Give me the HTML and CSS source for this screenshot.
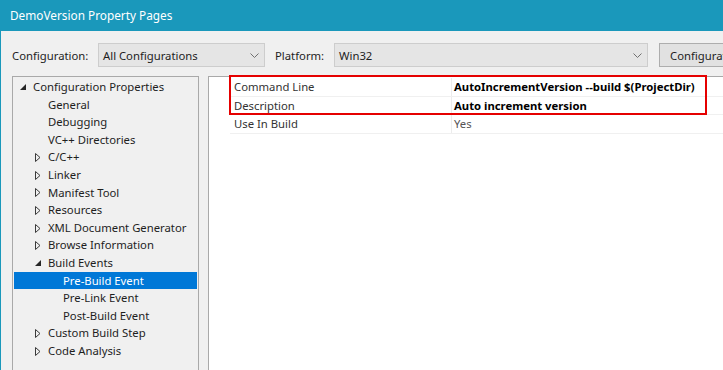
FILE: index.html
```html
<!DOCTYPE html>
<html>
<head>
<meta charset="utf-8">
<title>DemoVersion Property Pages</title>
<link rel="stylesheet" href="styles.css">
</head>
<body>
<div class="window">
  <div class="titlebar">DemoVersion Property Pages</div>
  <div class="toolbar">
    <span class="label">Configuration:</span>
    <div class="combo combo-config">
      <span>All Configurations</span>
      <svg class="chev" width="9" height="5" viewBox="0 0 9 5"><path d="M0.5 0.5 L4.5 4.5 L8.5 0.5" fill="none" stroke="#707070" stroke-width="1"/></svg>
    </div>
    <span class="label label-platform">Platform:</span>
    <div class="combo combo-platform">
      <span>Win32</span>
      <svg class="chev" width="9" height="5" viewBox="0 0 9 5"><path d="M0.5 0.5 L4.5 4.5 L8.5 0.5" fill="none" stroke="#707070" stroke-width="1"/></svg>
    </div>
    <button class="btn">Configuration Manager...</button>
  </div>
  <div class="main">
    <div class="tree">
      <div class="node l0"><span class="twisty"><svg width="6" height="6" viewBox="0 0 6 6"><polygon points="6,0 6,6 0,6" fill="#262626"/></svg></span>Configuration Properties</div>
      <div class="node l1"><span class="twisty"></span>General</div>
      <div class="node l1"><span class="twisty"></span>Debugging</div>
      <div class="node l1"><span class="twisty"></span>VC++ Directories</div>
      <div class="node l1"><span class="twisty"><svg width="6" height="9" viewBox="0 0 6 9"><polygon points="0.5,0.5 5,4.5 0.5,8.5" fill="none" stroke="#3a3a3a" stroke-width="1"/></svg></span>C/C++</div>
      <div class="node l1"><span class="twisty"><svg width="6" height="9" viewBox="0 0 6 9"><polygon points="0.5,0.5 5,4.5 0.5,8.5" fill="none" stroke="#3a3a3a" stroke-width="1"/></svg></span>Linker</div>
      <div class="node l1"><span class="twisty"><svg width="6" height="9" viewBox="0 0 6 9"><polygon points="0.5,0.5 5,4.5 0.5,8.5" fill="none" stroke="#3a3a3a" stroke-width="1"/></svg></span>Manifest Tool</div>
      <div class="node l1"><span class="twisty"><svg width="6" height="9" viewBox="0 0 6 9"><polygon points="0.5,0.5 5,4.5 0.5,8.5" fill="none" stroke="#3a3a3a" stroke-width="1"/></svg></span>Resources</div>
      <div class="node l1"><span class="twisty"><svg width="6" height="9" viewBox="0 0 6 9"><polygon points="0.5,0.5 5,4.5 0.5,8.5" fill="none" stroke="#3a3a3a" stroke-width="1"/></svg></span>XML Document Generator</div>
      <div class="node l1"><span class="twisty"><svg width="6" height="9" viewBox="0 0 6 9"><polygon points="0.5,0.5 5,4.5 0.5,8.5" fill="none" stroke="#3a3a3a" stroke-width="1"/></svg></span>Browse Information</div>
      <div class="node l1"><span class="twisty"><svg width="6" height="6" viewBox="0 0 6 6"><polygon points="6,0 6,6 0,6" fill="#262626"/></svg></span>Build Events</div>
      <div class="node l2 selected"><span class="twisty"></span>Pre-Build Event</div>
      <div class="node l2"><span class="twisty"></span>Pre-Link Event</div>
      <div class="node l2"><span class="twisty"></span>Post-Build Event</div>
      <div class="node l1"><span class="twisty"><svg width="6" height="9" viewBox="0 0 6 9"><polygon points="0.5,0.5 5,4.5 0.5,8.5" fill="none" stroke="#3a3a3a" stroke-width="1"/></svg></span>Custom Build Step</div>
      <div class="node l1"><span class="twisty"><svg width="6" height="9" viewBox="0 0 6 9"><polygon points="0.5,0.5 5,4.5 0.5,8.5" fill="none" stroke="#3a3a3a" stroke-width="1"/></svg></span>Code Analysis</div>
    </div>
    <div class="grid">
      <div class="prop"><span class="name">Command Line</span><span class="value strong">AutoIncrementVersion --build $(ProjectDir)</span></div>
      <div class="prop"><span class="name">Description</span><span class="value strong">Auto increment version</span></div>
      <div class="prop"><span class="name">Use In Build</span><span class="value">Yes</span></div>
      <div class="highlight"></div>
    </div>
  </div>
</div>
</body>
</html>
```
FILE: styles.css
```css
html, body {
  margin: 0;
  padding: 0;
}
body {
  width: 723px;
  height: 370px;
  overflow: hidden;
  background: #f0f0f0;
  font-family: "Noto Sans", "Open Sans", sans-serif;
  font-size: 11.3px;
  color: #1e1e1e;
}
.window {
  height: 370px;
  box-sizing: border-box;
  border-left: 1px solid #1a98bb;
}
.titlebar {
  height: 31px;
  line-height: 31px;
  background: #1a98bb;
  color: #ffffff;
  font-size: 11.8px;
  padding-left: 9px;
  white-space: nowrap;
}
.toolbar {
  display: flex;
  align-items: center;
  height: 24px;
  padding: 12px 0 0 11px;
  white-space: nowrap;
}
.label {
  flex: none;
  width: 86px;
  color: #1e1e1e;
}
.label-platform {
  width: 59px;
  margin-left: 10px;
}
.combo {
  flex: none;
  box-sizing: border-box;
  height: 24px;
  display: flex;
  align-items: center;
  justify-content: space-between;
  padding: 0 5px 0 4px;
  background: #e5e5e5;
  border: 1px solid #cdcdcd;
}
.combo-config {
  width: 167px;
}
.combo-platform {
  width: 314px;
}
.chev {
  display: block;
  flex: none;
}
.btn {
  flex: none;
  box-sizing: border-box;
  height: 24px;
  margin-left: 11px;
  padding: 0 10px;
  background: #e1e1e1;
  border: 1px solid #adadad;
  font: inherit;
  color: #1e1e1e;
  white-space: nowrap;
}
.main {
  display: flex;
  gap: 9px;
  margin-top: 9px;
  padding-left: 11px;
}
.tree {
  flex: none;
  box-sizing: border-box;
  width: 187px;
  height: 320px;
  padding: 1px;
  border: 1px solid #a9a9a9;
}
.node {
  display: flex;
  align-items: center;
  height: 17.6px;
  line-height: 17.6px;
  white-space: nowrap;
  color: #1e1e1e;
}
.l0 { padding-left: 6px; }
.l1 { padding-left: 21px; }
.l2 { padding-left: 36px; }
.twisty {
  flex: none;
  width: 13px;
  height: 17.6px;
  display: flex;
  align-items: center;
}
.twisty svg {
  display: block;
  margin-top: 1px;
}
.node.selected {
  background: #0078d7;
  color: #ffffff;
}
.grid {
  position: relative;
  flex: none;
  box-sizing: border-box;
  width: 540px;
  height: 320px;
  padding-top: 1px;
  background: #ffffff;
  border: 1px solid #a9a9a9;
}
.prop {
  display: flex;
  align-items: stretch;
  box-sizing: border-box;
  height: 18.5px;
  margin-left: 21px;
  border-bottom: 1px solid #f0f0f0;
  white-space: nowrap;
}
.name {
  flex: none;
  box-sizing: border-box;
  width: 221px;
  padding-left: 4px;
  display: flex;
  align-items: center;
  color: #333333;
}
.value {
  flex: 1;
  display: flex;
  align-items: center;
  padding-left: 2px;
  border-left: 1px solid #ececec;
  color: #555555;
}
.value.strong {
  font-weight: bold;
  color: #000000;
}
.highlight {
  position: absolute;
  left: 20px;
  top: -2px;
  width: 478px;
  height: 40px;
  box-sizing: border-box;
  border: 2px solid #e50000;
  pointer-events: none;
}
```
